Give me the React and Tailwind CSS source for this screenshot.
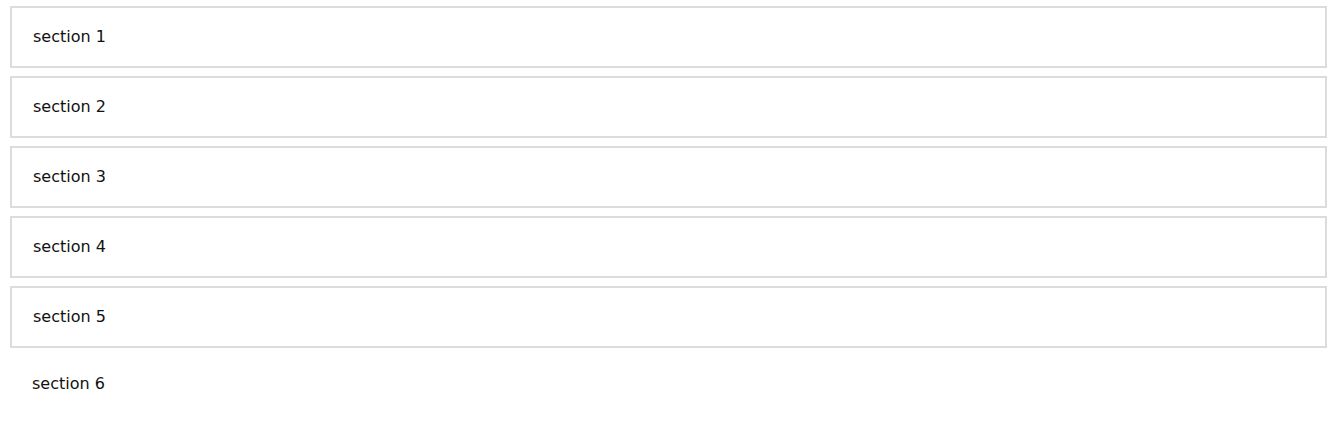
import React from "react";

const sections = ["section 1", "section 2", "section 3", "section 4", "section 5"];

export default function App() {
    return (
        <div className="min-h-[422px] bg-white pt-[6px] pl-[10px] pr-[9px] text-[#111] font-['Century_Gothic','DejaVu_Sans',sans-serif]">
            {sections.map((s) => (
                <div
                    key={s}
                    className="h-[62px] mb-[8px] border-2 border-[#dcdcdc] pl-[21px] flex items-center text-[16px]"
                >
                    {s}
                </div>
            ))}
            <div className="h-[62px] pl-[22px] flex items-center text-[16px] -mt-[3px]">section 6</div>
        </div>
    );
}
